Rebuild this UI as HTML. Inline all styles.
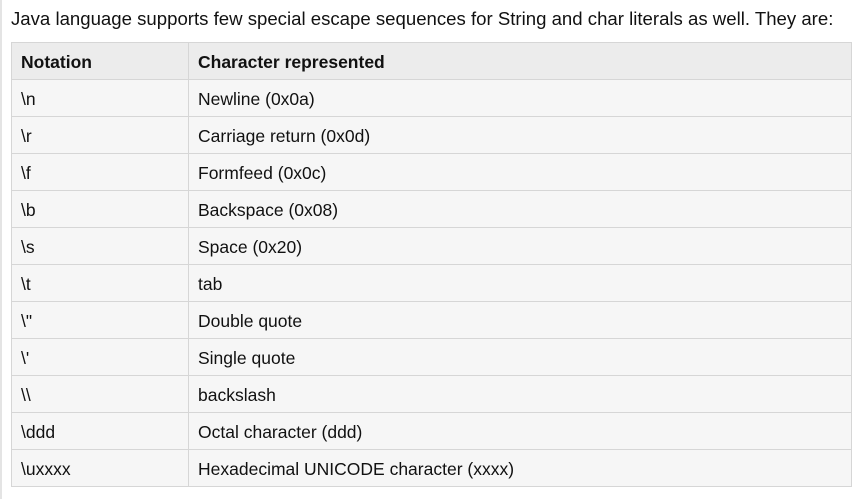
<!DOCTYPE html>
<html><head><style>
html,body{margin:0;padding:0;background:#fff;width:863px;height:499px;overflow:hidden}
body{font-family:"Liberation Sans",Arial,sans-serif;font-size:17.5px;color:#111;position:relative}
.lb{position:absolute;left:0;top:0;width:2px;height:499px;background:#e4e4e4}
p{position:absolute;left:11px;top:8px;margin:0;line-height:22px;white-space:nowrap;font-size:18.6px}
table{position:absolute;left:11px;top:42px;border-collapse:collapse;width:841px}
td,th{border:1px solid #d6d6d6;height:36px;padding:3px 0 0 9px;box-sizing:border-box;text-align:left;background:#f6f6f6;font-weight:normal;white-space:nowrap}
tr{height:37px}
th{background:#ececec;font-weight:bold}
td:first-child,th:first-child{width:177px}
</style></head><body>
<div class="lb"></div>
<p>Java language supports few special escape sequences for String and char literals as well. They are:</p>
<table>
<tr><th>Notation</th><th>Character represented</th></tr>
<tr><td>\n</td><td>Newline (0x0a)</td></tr>
<tr><td>\r</td><td>Carriage return (0x0d)</td></tr>
<tr><td>\f</td><td>Formfeed (0x0c)</td></tr>
<tr><td>\b</td><td>Backspace (0x08)</td></tr>
<tr><td>\s</td><td>Space (0x20)</td></tr>
<tr><td>\t</td><td>tab</td></tr>
<tr><td>\"</td><td>Double quote</td></tr>
<tr><td>\'</td><td>Single quote</td></tr>
<tr><td>\\</td><td>backslash</td></tr>
<tr><td>\ddd</td><td>Octal character (ddd)</td></tr>
<tr><td>\uxxxx</td><td>Hexadecimal UNICODE character (xxxx)</td></tr>
</table>
</body></html>
